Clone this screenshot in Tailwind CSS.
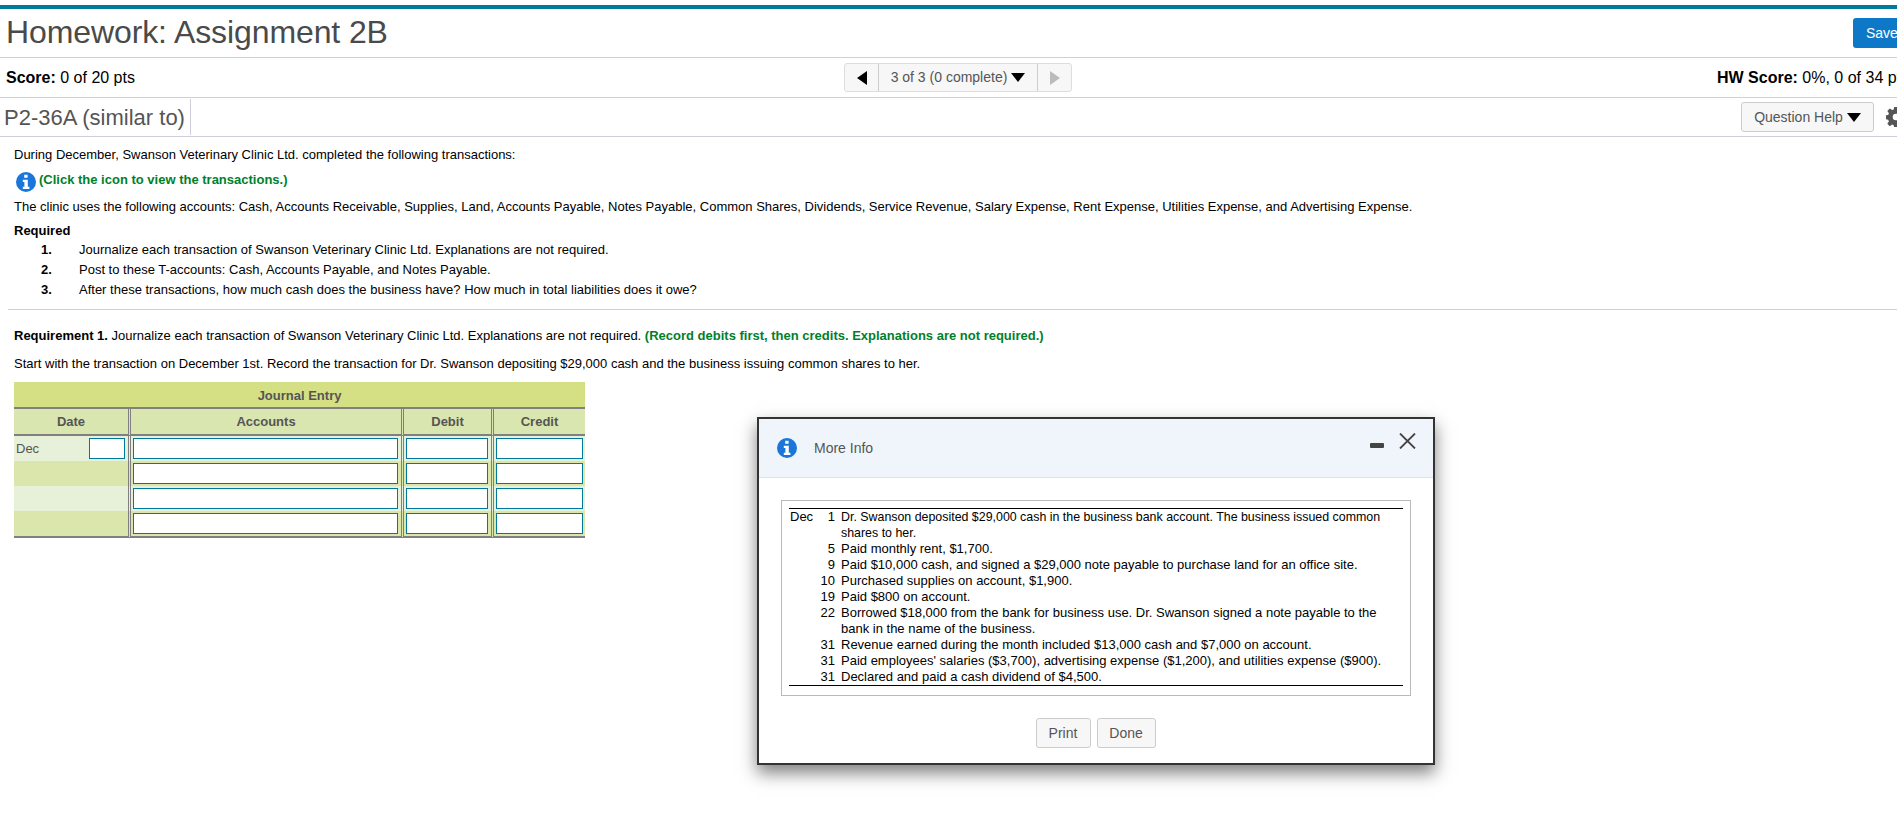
<!DOCTYPE html>
<html lang="en">
<head>
  <meta charset="UTF-8" />
  <title>Homework: Assignment 2B</title>
  <script src="https://cdn.jsdelivr.net/npm/@tailwindcss/browser@4"></script>
</head>
<body class="relative h-[825px] w-[1897px] overflow-hidden bg-white font-['Liberation_Sans',Arial,sans-serif] text-black">
  <!-- Top bar -->
  <div class="pt-[5px]"><div class="h-1 bg-[#007a9c]"></div></div>

  <!-- Title row -->
  <div class="flex h-[49px] items-center border-b border-[#cfd0dc] pl-[6px]">
    <h1 class="-mt-[2px] w-[1847px] shrink-0 text-[32px] leading-none tracking-[-0.1px] text-[#4a4a4a]">Homework: Assignment 2B</h1>
    <button class="h-[30px] w-[70px] shrink-0 rounded-[3px] bg-[#0e78c8] pl-[13px] text-left text-[14px] text-white">Save</button>
  </div>

  <!-- Score row -->
  <div class="flex h-[40px] items-center border-b border-[#cfd0dc] pl-[6px] text-[16px]">
    <div class="w-[838px] shrink-0"><b>Score:</b> 0 of 20 pts</div>
    <div class="flex h-[29px] w-[228px] shrink-0 items-center rounded-[3px] border border-[#dddddd] bg-[#f7f7f7] text-[14px] text-[#555555]">
      <div class="flex h-full w-[34px] items-center justify-center border-r border-[#cccccc]">
        <svg width="10" height="14" viewBox="0 0 10 14"><path d="M10 0V14L0 7Z" fill="#000"/></svg>
      </div>
      <div class="flex h-full w-[159px] items-center justify-center gap-[4px] border-r border-[#cccccc]">
        <span>3 of 3 (0 complete)</span>
        <svg width="14" height="9" viewBox="0 0 14 9"><path d="M0 0H14L7 9Z" fill="#000"/></svg>
      </div>
      <div class="flex h-full flex-1 items-center justify-center">
        <svg width="10" height="14" viewBox="0 0 10 14"><path d="M0 0V14L10 7Z" fill="#bbbbbb"/></svg>
      </div>
    </div>
    <div class="ml-[645px] shrink-0 whitespace-nowrap"><b>HW Score:</b> 0%, 0 of 34 pts</div>
  </div>

  <!-- Question row -->
  <div class="flex h-[39px] items-center border-b border-[#cfd0dc] pl-1">
    <div class="flex h-[36px] w-[187px] shrink-0 items-center border-r border-[#cfd0dc] text-[22px] text-[#555555]">P2-36A (similar to)</div>
    <button class="ml-[1550px] flex h-[30px] w-[133px] shrink-0 items-center justify-center gap-[4px] rounded-[3px] border border-[#cccccc] bg-[#f7f7f7] text-[14px] text-[#555555]">
      <span>Question Help</span>
      <svg width="14" height="9" viewBox="0 0 14 9"><path d="M0 0H14L7 9Z" fill="#000"/></svg>
    </button>
    <svg class="ml-[12px] shrink-0" width="20" height="20" viewBox="0 0 20 20">
      <path fill="#555555" fill-rule="evenodd" d="M8.2 0h3.6l.5 2.7 1.6.7L16.2 1.8l2.5 2.5-1.6 2.3.7 1.6 2.7.5v3.6l-2.7.5-.7 1.6 1.6 2.3-2.5 2.5-2.3-1.6-1.6.7-.5 2.7H8.2l-.5-2.7-1.6-.7-2.3 1.6-2.5-2.5 1.6-2.3-.7-1.6L-.5 12V8.4l2.7-.5.7-1.6-1.6-2.3 2.5-2.5 2.3 1.6 1.6-.7ZM10 6.7a3.3 3.3 0 1 0 0 6.6 3.3 3.3 0 0 0 0-6.6Z"/>
    </svg>
  </div>

  <!-- Question text -->
  <div class="px-[14px] pt-[8px] text-[13px] leading-[20px]">
    <p>During December, Swanson Veterinary Clinic Ltd. completed the following transactions:</p>
    <p class="mt-[6px] flex h-[20px] items-center">
      <svg class="ml-[2px] mt-[2px] shrink-0" width="20" height="20" viewBox="0 0 20 20">
        <circle cx="10" cy="10" r="10" fill="#1a76d8"/>
        <path fill="#fff" d="M8.2 2.8h3.4v3H8.2ZM6.8 7.8h5v7h1.6v2.2H6.8v-2.2h1.6V10H6.8Z"/>
      </svg>
      <b class="ml-[3px] -mt-[3px] text-[#00802b]">(Click the icon to view the transactions.)</b>
    </p>
    <p class="mt-[6px]">The clinic uses the following accounts: Cash, Accounts Receivable, Supplies, Land, Accounts Payable, Notes Payable, Common Shares, Dividends, Service Revenue, Salary Expense, Rent Expense, Utilities Expense, and Advertising Expense.</p>
    <p class="mt-[4px] font-bold">Required</p>
    <ol class="-mt-px">
      <li class="flex"><b class="ml-[27px] w-[38px]">1.</b><span>Journalize each transaction of Swanson Veterinary Clinic Ltd. Explanations are not required.</span></li>
      <li class="flex"><b class="ml-[27px] w-[38px]">2.</b><span>Post to these T-accounts: Cash, Accounts Payable, and Notes Payable.</span></li>
      <li class="flex"><b class="ml-[27px] w-[38px]">3.</b><span>After these transactions, how much cash does the business have? How much in total liabilities does it owe?</span></li>
    </ol>
  </div>
  <div class="ml-2 mt-[9px] border-t border-[#cfd0dc]"></div>
  <div class="px-[14px] text-[13px] leading-[20px]">
    <p class="mt-[16px]"><b>Requirement 1.</b> Journalize each transaction of Swanson Veterinary Clinic Ltd. Explanations are not required. <b class="text-[#00802b]">(Record debits first, then credits. Explanations are not required.)</b></p>
    <p class="mt-[8px]">Start with the transaction on December 1st. Record the transaction for Dr. Swanson depositing $29,000 cash and the business issuing common shares to her.</p>

    <!-- Journal table -->
    <table class="mt-[8px] w-[571px] table-fixed border-separate border-spacing-0 text-[13px] leading-none text-[#555555]">
      <colgroup><col class="w-[117px]"/><col class="w-[273px]"/><col class="w-[90px]"/><col class="w-[91px]"/></colgroup>
      <thead>
        <tr><th colspan="4" class="h-[27px] border-b-2 border-[#808080] bg-[#d5e085] pt-[2px]">Journal Entry</th></tr>
        <tr class="bg-[#dae6b0]">
          <th class="h-[27px] border-b-2 border-r-[3px] border-double border-b-[#808080] border-r-[#808080] font-bold">Date</th>
          <th class="border-b-2 border-r-[3px] border-double border-b-[#808080] border-r-[#808080]">Accounts</th>
          <th class="border-b-2 border-r-[3px] border-double border-b-[#808080] border-r-[#808080]">Debit</th>
          <th class="border-b-2 border-solid border-b-[#808080]">Credit</th>
        </tr>
      </thead>
      <tbody>
        <tr class="h-[25px] bg-[#e7f0d8]">
          <td class="border-r-[3px] border-double border-[#808080]">
            <div class="flex items-center justify-between pl-[2px] pr-[3px]"><span>Dec</span><input class="h-[21px] w-[36px] border border-[#007a9c] bg-white"/></div>
          </td>
          <td class="border-r-[3px] border-double border-[#808080] pl-[2px] pr-[3px]"><input class="block h-[21px] w-full border border-[#007a9c] bg-white"/></td>
          <td class="border-r-[3px] border-double border-[#808080] pl-[2px] pr-[3px]"><input class="block h-[21px] w-full border border-[#007a9c] bg-white"/></td>
          <td class="px-[2px]"><input class="block h-[21px] w-full border border-[#007a9c] bg-white"/></td>
        </tr>
        <tr class="h-[25px] bg-[#dbe6ad]">
          <td class="border-r-[3px] border-double border-[#808080]"></td>
          <td class="border-r-[3px] border-double border-[#808080] pl-[2px] pr-[3px]"><input class="block h-[21px] w-full border border-[#007a9c] bg-white"/></td>
          <td class="border-r-[3px] border-double border-[#808080] pl-[2px] pr-[3px]"><input class="block h-[21px] w-full border border-[#007a9c] bg-white"/></td>
          <td class="px-[2px]"><input class="block h-[21px] w-full border border-[#007a9c] bg-white"/></td>
        </tr>
        <tr class="h-[25px] bg-[#e7f0d8]">
          <td class="border-r-[3px] border-double border-[#808080]"></td>
          <td class="border-r-[3px] border-double border-[#808080] pl-[2px] pr-[3px]"><input class="block h-[21px] w-full border border-[#007a9c] bg-white"/></td>
          <td class="border-r-[3px] border-double border-[#808080] pl-[2px] pr-[3px]"><input class="block h-[21px] w-full border border-[#007a9c] bg-white"/></td>
          <td class="px-[2px]"><input class="block h-[21px] w-full border border-[#007a9c] bg-white"/></td>
        </tr>
        <tr class="h-[27px] bg-[#dbe6ad]">
          <td class="border-b-2 border-r-[3px] border-double border-b-[#808080] border-r-[#808080]"></td>
          <td class="border-b-2 border-r-[3px] border-double border-b-[#808080] border-r-[#808080] pl-[2px] pr-[3px]"><input class="block h-[21px] w-full border border-[#007a9c] bg-white"/></td>
          <td class="border-b-2 border-r-[3px] border-double border-b-[#808080] border-r-[#808080] pl-[2px] pr-[3px]"><input class="block h-[21px] w-full border border-[#007a9c] bg-white"/></td>
          <td class="border-b-2 border-solid border-b-[#808080] px-[2px]"><input class="block h-[21px] w-full border border-[#007a9c] bg-white"/></td>
        </tr>
      </tbody>
    </table>
  </div>

  <!-- More Info dialog -->
  <div class="absolute left-[757px] top-[417px] flex h-[348px] w-[678px] flex-col border-2 border-[#333333] bg-white shadow-[0_8px_16px_rgba(0,0,0,0.5)]">
    <div class="relative flex h-[59px] shrink-0 items-center border-b border-[#d5e3f3] bg-[#f0f5fc] pl-[18px] text-[14px] text-[#555555]">
      <svg class="shrink-0" width="20" height="20" viewBox="0 0 20 20">
        <circle cx="10" cy="10" r="10" fill="#1a76d8"/>
        <path fill="#fff" d="M8.2 2.8h3.4v3H8.2ZM6.8 7.8h5v7h1.6v2.2H6.8v-2.2h1.6V10H6.8Z"/>
      </svg>
      <span class="ml-[17px]">More Info</span>
      <div class="absolute left-[611px] top-[24px] h-[5px] w-[14px] rounded-[1px] bg-[#444444]"></div>
      <svg class="absolute left-[640px] top-[14px]" width="17" height="16" viewBox="0 0 17 16"><path d="M1 0.5 16 15.5M16 0.5 1 15.5" stroke="#444444" stroke-width="1.8" fill="none"/></svg>
    </div>
    <div class="mx-[22px] mt-[22px] h-[196px] border border-[#b9b9b9] px-[7px] pt-[7px]">
      <div class="border-y border-black text-[13px] leading-[16px]">
        <div class="flex"><span class="flex w-[46px] shrink-0 justify-between pl-px"><span>Dec</span><span>1</span></span><span class="ml-[6px] w-[550px] text-[12.4px]">Dr. Swanson deposited $29,000 cash in the business bank account. The business issued common shares to her.</span></div>
        <div class="flex"><span class="w-[46px] shrink-0 text-right">5</span><span class="ml-[6px]">Paid monthly rent, $1,700.</span></div>
        <div class="flex"><span class="w-[46px] shrink-0 text-right">9</span><span class="ml-[6px]">Paid $10,000 cash, and signed a $29,000 note payable to purchase land for an office site.</span></div>
        <div class="flex"><span class="w-[46px] shrink-0 text-right">10</span><span class="ml-[6px]">Purchased supplies on account, $1,900.</span></div>
        <div class="flex"><span class="w-[46px] shrink-0 text-right">19</span><span class="ml-[6px]">Paid $800 on account.</span></div>
        <div class="flex"><span class="w-[46px] shrink-0 text-right">22</span><span class="ml-[6px] w-[550px]">Borrowed $18,000 from the bank for business use. Dr. Swanson signed a note payable to the bank in the name of the business.</span></div>
        <div class="flex"><span class="w-[46px] shrink-0 text-right">31</span><span class="ml-[6px]">Revenue earned during the month included $13,000 cash and $7,000 on account.</span></div>
        <div class="flex"><span class="w-[46px] shrink-0 text-right">31</span><span class="ml-[6px]">Paid employees' salaries ($3,700), advertising expense ($1,200), and utilities expense ($900).</span></div>
        <div class="flex"><span class="w-[46px] shrink-0 text-right">31</span><span class="ml-[6px]">Declared and paid a cash dividend of $4,500.</span></div>
      </div>
    </div>
    <div class="mt-[22px] flex justify-center gap-[6px] pr-[1px] text-[14px] text-[#555555]">
      <button class="h-[30px] w-[55px] rounded-[3px] border border-[#cccccc] bg-[#f7f7f7]">Print</button>
      <button class="h-[30px] w-[59px] rounded-[3px] border border-[#cccccc] bg-[#f7f7f7]">Done</button>
    </div>
  </div>
</body>
</html>
